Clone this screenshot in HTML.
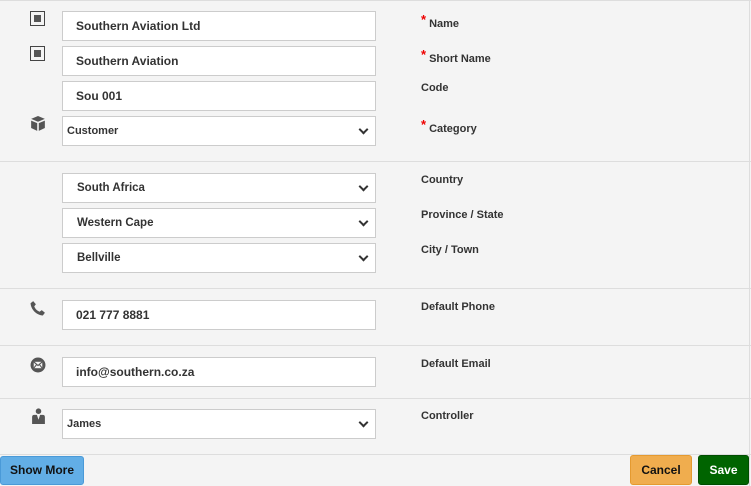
<!DOCTYPE html><html><head><style>
body{margin:0;width:751px;height:486px;background:#f4f4f4;font-family:"Liberation Sans",Arial,sans-serif;position:relative;overflow:hidden}
.f{position:absolute;left:62px;width:314px;height:30px;background:#fff;border:1px solid #ccc;font-size:12px;font-weight:bold;color:#333;line-height:28px;padding-left:13px;box-sizing:border-box}
.s{font-size:11px;padding-left:4px}
.s2{font-size:11.5px;padding-left:14px}
.s:after,.s2:after{content:"";position:absolute;right:8px;top:9px;width:5px;height:5px;border-right:2px solid #333;border-bottom:2px solid #333;transform:rotate(45deg)}
.l{position:absolute;left:421px;font-size:11px;font-weight:bold;color:#333}
.l b{color:#e00;font-size:13px;position:relative;top:-3px;margin-right:3px}
.h{position:absolute;left:0;width:751px;height:1px;background:#ddd}
.ic{position:absolute;left:30px;width:15px;height:15px;border:1px solid #444;box-sizing:border-box}
.ic:after{content:"";position:absolute;left:3px;top:3px;width:7px;height:7px;background:#555}
.btn{position:absolute;font-size:12px;font-weight:bold;text-align:center;border-radius:3px;box-sizing:border-box}
</style></head><body>
<div class="h" style="top:0"></div>
<div style="position:absolute;left:749px;top:0;width:1px;height:486px;background:#ddd"></div>
<div class="h" style="top:161px"></div><div class="h" style="top:288px"></div><div class="h" style="top:345px"></div><div class="h" style="top:398px"></div><div class="h" style="top:454px"></div>
<div class="ic" style="top:11px"></div><div class="ic" style="top:46px"></div>
<svg style="position:absolute;left:30px;top:116px" width="16" height="16" viewBox="0 0 14 14"><path d="M7 0L13 2.5L7 5L1 2.5Z" fill="#555"/><path d="M1 4L6.3 6.2V13L1 10.5Z M13 4L7.7 6.2V13L13 10.5Z" fill="#555"/></svg>
<svg style="position:absolute;left:30px;top:300px" width="16" height="16" viewBox="0 0 15 15"><path d="M3 1L5.5 4L4 6C5 8.5 6.5 10 9 11L11 9.5L14 12L12 14.5C6 14 1 9 0.5 3Z" fill="#555"/></svg>
<svg style="position:absolute;left:30px;top:357px" width="16" height="16" viewBox="0 0 15 15"><circle cx="7.5" cy="7.5" r="7" fill="#555"/><rect x="3.5" y="4.5" width="8" height="6" fill="#f4f4f4"/><path d="M3.5 4.5L7.5 8L11.5 4.5M3.5 10.5L6.3 7M11.5 10.5L8.7 7" stroke="#555" fill="none"/></svg>
<svg style="position:absolute;left:31px;top:408px" width="15" height="16" viewBox="0 0 14 15"><circle cx="7" cy="3" r="2.6" fill="#555"/><path d="M1 15V8.5Q1 6.5 3 6.5H5.5L7 11L8.5 6.5H11Q13 6.5 13 8.5V15Z" fill="#555"/></svg>
<div class="f" style="top:11px">Southern Aviation Ltd</div>
<div class="f" style="top:46px">Southern Aviation</div>
<div class="f" style="top:81px">Sou 001</div>
<div class="f s" style="top:116px">Customer</div>
<div class="f s2" style="top:173px">South Africa</div>
<div class="f s2" style="top:208px">Western Cape</div>
<div class="f s2" style="top:243px">Bellville</div>
<div class="f" style="top:300px">021 777 8881</div>
<div class="f" style="top:357px">info@southern.co.za</div>
<div class="f s" style="top:409px">James</div>
<div class="l" style="top:15px"><b>*</b>Name</div>
<div class="l" style="top:50px"><b>*</b>Short Name</div>
<div class="l" style="top:82px">Code</div>
<div class="l" style="top:120px"><b>*</b>Category</div>
<div class="l" style="top:174px">Country</div>
<div class="l" style="top:209px">Province / State</div>
<div class="l" style="top:244px">City / Town</div>
<div class="l" style="top:301px">Default Phone</div>
<div class="l" style="top:358px">Default Email</div>
<div class="l" style="top:410px">Controller</div>
<div class="btn" style="left:0;top:456px;width:84px;height:29px;line-height:27px;background:#62aee6;border:1px solid #4a9ad8;color:#111">Show More</div>
<div class="btn" style="left:630px;top:455px;width:62px;height:30px;line-height:28px;background:#f0ad4e;border:1px solid #e59a30;color:#111">Cancel</div>
<div class="btn" style="left:698px;top:455px;width:51px;height:30px;line-height:28px;background:#006400;border:1px solid #004d00;color:#fff">Save</div>
</body></html>
